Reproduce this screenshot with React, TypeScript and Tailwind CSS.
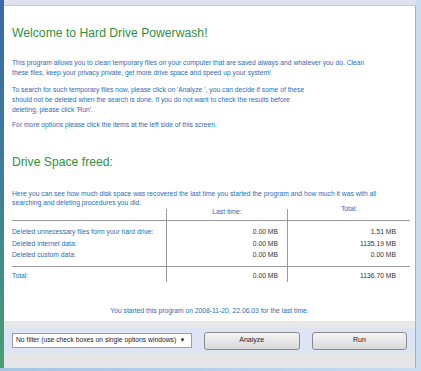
const rows = [
  { label: "Deleted unnecessary files form your hard drive:", last: "0.00 MB", total: "1.51 MB" },
  { label: "Deleted internet data:", last: "0.00 MB", total: "1135.19 MB" },
  { label: "Deleted custom data:", last: "0.00 MB", total: "0.00 MB" },
];

const App = () => {
  return (
    <div className="w-[421px] h-[371px] flex flex-col bg-[#c9dcf0] overflow-hidden font-['Liberation_Sans',Arial,sans-serif]">
      {/* top bar */}
      <div className="h-[6px] flex">
        <div className="w-[4px] bg-[#3a6aa3]" />
        <div className="flex-1 bg-[#dfe1ee] border-b border-[#c4c7d8]" />
        <div className="w-[5px] bg-[#c9dcf0]" />
      </div>

      <div className="flex-1 flex">
        {/* left strip */}
        <div className="w-[4px] bg-gradient-to-b from-[#3a6aa3] via-[#3f7f96] to-[#4c9b72]" />

        <div className="w-[412px] flex flex-col border-r border-[#a9adb8]">
          {/* white content */}
          <div className="h-[315px] bg-white px-[8px] text-[#2a6cb8] text-[6.75px] leading-[10px]">
            <h1 className="mt-[19px] text-[12.2px] leading-[16px] text-[#2f9140] whitespace-nowrap">
              Welcome to Hard Drive Powerwash!
            </h1>

            <p className="mt-[17px] whitespace-nowrap">
              This program allows you to clean temporary files on your computer that are saved always and whatever you do. Clean
              <br />
              these files, keep your privacy private, get more drive space and speed up your system!
            </p>
            <p className="mt-[7px] whitespace-nowrap">
              To search for such temporary files now, please click on 'Analyze ', you can decide if some of these
              <br />
              should not be deleted when the search is done. If you do not want to check the results before
              <br />
              deleting, please click 'Run'.
            </p>
            <p className="mt-[5px] whitespace-nowrap">For more options please click the items at the left side of this screen.</p>

            <h2 className="mt-[24px] text-[12.2px] leading-[16px] text-[#2f9140] whitespace-nowrap">Drive Space freed:</h2>

            <p className="mt-[20px] leading-[8.5px] whitespace-nowrap">
              Here you can see how much disk space was recovered the last time you started the program and how much it was with all
              <br />
              searching and deleting procedures you did.
            </p>

            {/* table */}
            <div className="w-[398px] -mt-[3px]">
              <div className="grid grid-cols-[154px_121px_123px] border-b border-[#9a9a9a] h-[17px]">
                <div />
                <div className="mt-[5px] border-l border-[#9a9a9a] text-center">
                  <div className="-mt-[2px]">Last time:</div>
                </div>
                <div className="mt-[5px] border-l border-[#9a9a9a] text-center">
                  <div className="-mt-[5px]">Total:</div>
                </div>
              </div>
              <div className="grid grid-cols-[154px_121px_123px] border-b border-[#9a9a9a]">
                <div className="pt-[6px] pb-[6px] flex flex-col gap-[1.5px]">
                  {rows.map((r) => (
                    <div key={r.label} className="whitespace-nowrap">{r.label}</div>
                  ))}
                </div>
                <div className="border-l border-[#9a9a9a] pt-[6px] pb-[6px] pr-[9px] flex flex-col gap-[1.5px] items-end text-[#333]">
                  {rows.map((r) => (
                    <div key={r.label}>{r.last}</div>
                  ))}
                </div>
                <div className="border-l border-[#9a9a9a] pt-[6px] pb-[6px] pr-[14px] flex flex-col gap-[1.5px] items-end text-[#333]">
                  {rows.map((r) => (
                    <div key={r.label}>{r.total}</div>
                  ))}
                </div>
              </div>
              <div className="grid grid-cols-[154px_121px_123px] h-[15px]">
                <div className="pt-[4px]">Total:</div>
                <div className="border-l border-[#9a9a9a] pr-[9px] pt-[4px] text-right text-[#333]">0.00 MB</div>
                <div className="border-l border-[#9a9a9a] pr-[14px] pt-[4px] text-right text-[#333]">1136.70 MB</div>
              </div>
            </div>

            <p className="mt-[24px] text-center whitespace-nowrap">You started this program on 2008-11-20, 22.06.03 for the last time.</p>
          </div>

          {/* bottom bar */}
          <div className="h-[7px] bg-[#e8e8e8]" />
          <div className="h-[25px] bg-[#dfe4f4] flex items-center px-[8px] gap-[12px]">
            <div className="w-[181px] h-[15px] bg-white border border-[#9c9c9c] flex items-center justify-between px-[3px] text-[6.75px] text-[#222]">
              <span className="whitespace-nowrap">No filter (use check boxes on single options windows)</span>
              <span className="text-[6px] mr-[2px]">▼</span>
            </div>
            <button className="w-[97px] h-[18px] rounded-[3px] border border-[#8b8b8b] bg-gradient-to-b from-[#f4f4f4] to-[#d9d9d9] text-[7px] text-[#222]">
              Analyze
            </button>
            <button className="w-[96px] h-[18px] rounded-[3px] border border-[#8b8b8b] bg-gradient-to-b from-[#f4f4f4] to-[#d9d9d9] text-[7px] text-[#222]">
              Run
            </button>
          </div>
          <div className="flex-1 bg-[#e6e6e6]" />
        </div>

        {/* right strip */}
        <div className="flex-1 bg-[#c9dcf0]" />
      </div>

      {/* bottom strip */}
      <div className="h-[3px] bg-gradient-to-r from-[#a6c4e4] to-[#c9dcf0]" />
    </div>
  );
};

export default App;
